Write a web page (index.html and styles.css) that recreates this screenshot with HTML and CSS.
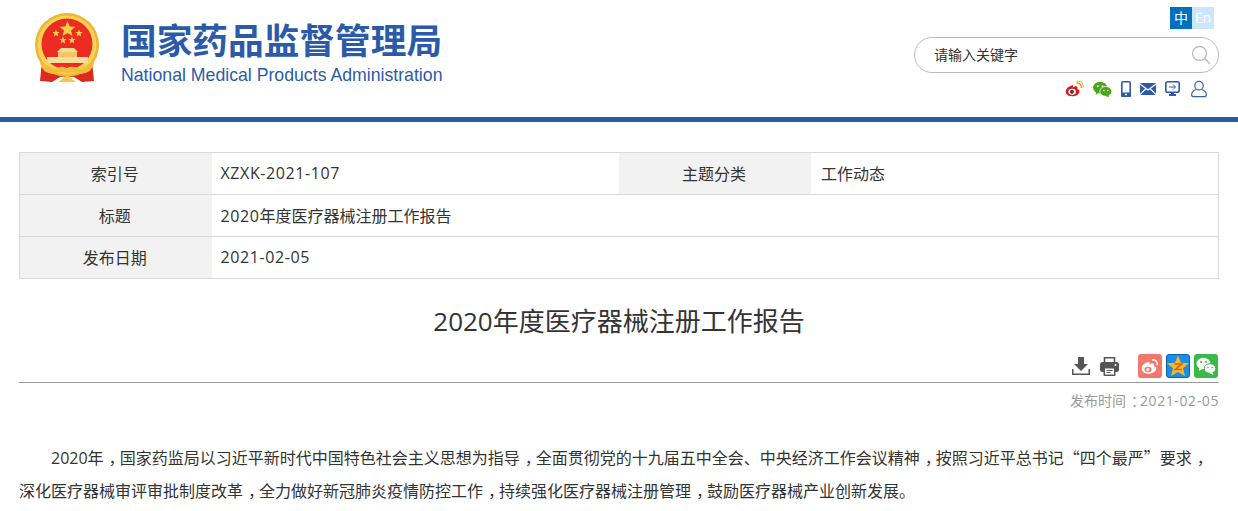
FILE: index.html
```html
<!DOCTYPE html>
<html lang="zh-CN">
<head>
<meta charset="UTF-8">
<title>2020年度医疗器械注册工作报告</title>
<link rel="stylesheet" href="styles.css">
</head>
<body>
<header class="header">
    <div class="brand">
        <svg class="emblem" width="66" height="70" viewBox="0 0 66 70">
            <!-- ribbons behind the ring -->
            <path d="M8 48 L6 68 L18 69 L26 64 L40 64 L48 69 L60 68 L58 48 Z" fill="#dc2a20"/>
            <circle cx="33" cy="32" r="32" fill="#efb631"/>
            <circle cx="33" cy="32" r="29.500" fill="#f8d257"/>
            <circle cx="33" cy="31" r="25.500" fill="#ec2c22"/>
            <polygon points="33.500,8 35.700,13.500 41.500,13.800 37,17.500 38.500,23 33.500,20 28.500,23 30,17.500 25.500,13.800 31.300,13.500" fill="#f9cf47"/>
            <polygon points="22,16.500 23,19 25.700,19 23.500,20.800 24.300,23.500 22,22 19.700,23.500 20.500,20.800 18.300,19 21,19" fill="#f9cf47"/>
            <polygon points="45,16.500 46,19 48.700,19 46.500,20.800 47.300,23.500 45,22 42.700,23.500 43.500,20.800 41.300,19 44,19" fill="#f9cf47"/>
            <polygon points="29,23.500 30,26 32.700,26 30.500,27.800 31.300,30.500 29,29 26.700,30.500 27.500,27.800 25.300,26 28,26" fill="#f9cf47"/>
            <polygon points="38,23.500 39,26 41.700,26 39.500,27.800 40.300,30.500 38,29 35.700,30.500 36.500,27.800 34.300,26 37,26" fill="#f9cf47"/>
            <!-- gate -->
            <path d="M27 35 H40 L44 39 H23 Z" fill="#f7dc92"/>
            <path d="M24 39 H43 V44 H24 Z" fill="#f3c765"/>
            <path d="M13 44 H54 V50 H13 Z" fill="#f8de97"/>
            <!-- wheat and knot -->
            <path d="M6 50 Q14 52 20 56 Q27 52 33 55 Q39 52 46 56 Q52 52 60 50 Q58 60 47 61 Q40 58 33 60 Q26 58 19 61 Q8 60 6 50 Z" fill="#f2bd3c"/>
            <path d="M24 69 L33 62 L42 69 Z" fill="#f5c94f"/>
        </svg>
        <div class="brand-text">
            <div class="brand-cn">国家药品监督管理局</div>
            <div class="brand-en">National Medical Products Administration</div>
        </div>
    </div>
    <div class="tools">
        <div class="lang"><a class="lang-cn">中</a><a class="lang-en">En</a></div>
        <div class="search">
            <span class="search-text">请输入关键字</span>
            <svg width="20" height="20" viewBox="0 0 20 20" fill="none" stroke="#bdbdbd">
                <circle cx="8.500" cy="8.500" r="7" stroke-width="1.300"/>
                <path d="M13.500 13.500 L19 19" stroke-width="1.600"/>
            </svg>
        </div>
        <div class="links">
            <svg width="19" height="18" viewBox="0 0 20 18">
                <path d="M8 5 C3 6 0 10 1 13 C2 17 9 18 13 15 C17 12 15 9 13 9.500 C14 6 11 5 8 8 C9 6 9 5 8 5 Z" fill="#e0141c"/>
                <ellipse cx="7.500" cy="12" rx="4" ry="3.200" fill="#fff"/>
                <circle cx="7.300" cy="12" r="2.200" fill="#444"/>
                <path d="M12 3 C15 2 18 5 17 8" fill="none" stroke="#f4a51c" stroke-width="1.600"/>
                <path d="M12.500 1 C17 0 20 4 19 8" fill="none" stroke="#f4a51c" stroke-width="1"/>
            </svg>
            <svg width="19" height="17" viewBox="0 0 20 17">
                <ellipse cx="7.500" cy="6.500" rx="7.500" ry="6.200" fill="#4ba51b"/>
                <path d="M3 10 L3 14 L7 11 Z" fill="#4ba51b"/>
                <ellipse cx="13.500" cy="10.500" rx="6.300" ry="5.200" fill="#4ba51b" stroke="#fff" stroke-width=".8"/>
                <path d="M16 14 L17 17 L13 15 Z" fill="#4ba51b"/>
                <circle cx="5" cy="5" r="1" fill="#fff"/><circle cx="10" cy="5" r="1" fill="#fff"/>
                <circle cx="11.500" cy="9.500" r=".8" fill="#fff"/><circle cx="15.500" cy="9.500" r=".8" fill="#fff"/>
            </svg>
            <svg width="10" height="16" viewBox="0 0 10 16">
                <rect x=".8" y=".8" width="8.400" height="14.400" rx="1.500" fill="#fff" stroke="#2b5ba8" stroke-width="1.600"/>
                <rect x="0" y="11.500" width="10" height="4.500" rx="1" fill="#2b5ba8"/>
                <circle cx="5" cy="13.500" r="1" fill="#fff"/>
            </svg>
            <svg width="16" height="12" viewBox="0 0 16 12">
                <rect width="16" height="12" rx="1" fill="#2b5ba8"/>
                <path d="M0 1 L8 7 L16 1 M0 11.500 L6 5.500 M16 11.500 L10 5.500" fill="none" stroke="#fff" stroke-width="1.200"/>
            </svg>
            <svg width="15" height="16" viewBox="0 0 15 16">
                <rect x=".8" y=".8" width="13.400" height="10.400" rx="2" fill="#fff" stroke="#2b5ba8" stroke-width="1.600"/>
                <path d="M4 6 H10 M8 3.500 L10.500 6 L8 8.500" fill="none" stroke="#2b5ba8" stroke-width="1"/>
                <path d="M6 11 H9 V13 H11 V15 H4 V13 H6 Z" fill="#2b5ba8"/>
            </svg>
            <svg class="link-user" width="16" height="18" viewBox="0 0 17 18" fill="none" stroke="#3d62ad" stroke-width="1.300">
                <circle cx="8.500" cy="5.500" r="4.500"/>
                <path d="M5 9.500 C2 11 .7 13 .7 15 C.7 16.500 1.500 17.200 3 17.200 H14 C15.500 17.200 16.300 16.500 16.300 15 C16.300 13 15 11 12 9.500"/>
            </svg>
        </div>
    </div>
</header>

<main class="content">
    <table class="meta">
        <tr>
            <th>索引号</th>
            <td class="latin">XZXK-2021-107</td>
            <th>主题分类</th>
            <td class="topic">工作动态</td>
        </tr>
        <tr>
            <th>标题</th>
            <td colspan="3"><span class="latin">2020</span>年度医疗器械注册工作报告</td>
        </tr>
        <tr>
            <th>发布日期</th>
            <td colspan="3" class="latin">2021-02-05</td>
        </tr>
    </table>

    <h1 class="title">2020年度医疗器械注册工作报告</h1>

    <div class="actions">
        <svg class="act-download" width="18" height="18" viewBox="0 0 18 18" fill="#555">
            <path d="M6 0 H12 V7 H16 L9 14 L2 7 H6 Z"/>
            <path d="M0 12 H1.500 V16.500 H16.500 V12 H18 V18 H0 Z"/>
        </svg>
        <svg class="act-print" width="19" height="19" viewBox="0 0 19 19">
            <path d="M4.500 .8 H14.500 V6 H4.500 Z" fill="none" stroke="#555" stroke-width="1.600"/>
            <rect x="0" y="5" width="19" height="10" rx="2.500" fill="#555"/>
            <rect x="3.500" y="10" width="12" height="9" rx="1" fill="#555"/>
            <rect x="5" y="11.500" width="9" height="6" fill="#fff"/>
            <path d="M6.500 13.500 H12.500 M6.500 15.500 H10.500" stroke="#555"/>
            <circle cx="15.500" cy="8" r="1" fill="#fff"/>
        </svg>
        <div class="share">
            <svg width="24" height="24" viewBox="0 0 24 24">
                <rect width="24" height="24" rx="3" fill="#f4776b"/>
                <path d="M10 8 C5 9 3 13 4 16 C5 20 12 21 16 18 C20 15 18 12 16 12.500 C17 9 14 8 11 11 C12 9 12 8 10 8 Z" fill="#fff"/>
                <ellipse cx="10" cy="15.500" rx="3.500" ry="2.800" fill="#f4776b"/>
                <circle cx="9.800" cy="15.500" r="1.500" fill="#fff"/>
                <path d="M14 6 C17 5 20 8 19 11" fill="none" stroke="#fff" stroke-width="1.500"/>
            </svg>
            <svg width="24" height="24" viewBox="0 0 24 24">
                <rect x=".5" y=".5" width="23" height="23" rx="2.500" fill="#1a8ee6" stroke="#0a62b4"/>
                <polygon points="12,1.500 15,8.800 23,9.300 17,14.300 19,22 12,18 5,22 7,14.300 1,9.300 9,8.800" fill="#f8b71f"/>
                <path d="M8.500 10 H15.500 L9.500 15.500 H16" fill="none" stroke="#d2691e" stroke-width="1.700"/>
            </svg>
            <svg width="24" height="24" viewBox="0 0 24 24">
                <rect width="24" height="24" rx="3" fill="#3cb846"/>
                <ellipse cx="9.500" cy="9.500" rx="7" ry="5.800" fill="#fff"/>
                <path d="M5 13 L5 17 L9 14.500 Z" fill="#fff"/>
                <ellipse cx="16" cy="14.500" rx="5.800" ry="4.800" fill="#fff" stroke="#3cb846"/>
                <path d="M18.500 18 L19.500 21 L15.500 19 Z" fill="#fff"/>
                <circle cx="7" cy="8" r="1" fill="#3cb846"/><circle cx="12" cy="8" r="1" fill="#3cb846"/>
                <circle cx="14" cy="13.500" r=".8" fill="#3cb846"/><circle cx="18" cy="13.500" r=".8" fill="#3cb846"/>
            </svg>
        </div>
    </div>

    <div class="date">发布时间<span class="comma">：</span><span class="latin">2021-02-05</span></div>

    <div class="article">
        <p>2020年<span class="comma">，</span>国家药监局以习近平新时代中国特色社会主义思想为指导<span class="comma">，</span>全面贯彻党的十九届五中全会、中央经济工作会议精神<span class="comma">，</span>按照习近平总书记<span class="cjk">“四个最严”</span>要求<span class="comma">，</span>深化医疗器械审评审批制度改革<span class="comma">，</span>全力做好新冠肺炎疫情防控工作<span class="comma">，</span>持续强化医疗器械注册管理<span class="comma">，</span>鼓励医疗器械产业创新发展。</p>
    </div>
</main>
</body>
</html>
```

FILE: styles.css
```css
html, body {
    margin: 0;
    padding: 0;
}
body {
    font-family: "Open Sans", "Noto Sans CJK SC", sans-serif;
    color: #333;
    background: #fff;
    overflow: hidden;
}
.latin {
    letter-spacing: .6px;
}
.cjk {
    font-family: "Noto Sans CJK SC", sans-serif;
}
/* full-width punctuation sits in the middle of its box */
.comma {
    padding-left: 5px;
    letter-spacing: -5px;
}
.header {
    display: flex;
    justify-content: space-between;
    height: 117px;
    border-bottom: 5px solid #2b5ba8;
    padding: 0 19px 0 34px;
}
.brand {
    display: flex;
    align-items: flex-start;
    padding-top: 13px;
}
.emblem {
    margin-right: 21px;
}
.brand-cn {
    font: bold 35.700px/40px "Noto Sans CJK SC", sans-serif;
    color: #2b5ba8;
    white-space: nowrap;
    margin-top: 6px;
}
.brand-en {
    font: 17.700px/22px "Liberation Sans", sans-serif;
    color: #2b5ba8;
    margin-top: 5px;
    white-space: nowrap;
}
.tools {
    display: flex;
    flex-direction: column;
    align-items: flex-end;
    width: 305px;
    padding-top: 7px;
}
.lang {
    display: flex;
    margin-right: 5px;
}
.lang a {
    width: 22px;
    height: 22px;
    font-size: 14px;
    line-height: 21px;
    text-align: center;
    color: #fff;
}
.lang-cn {
    background: #0070c0;
}
.lang-en {
    background: #cce6ff;
}
.search {
    box-sizing: border-box;
    display: flex;
    align-items: center;
    justify-content: space-between;
    width: 305px;
    height: 36px;
    margin-top: 8px;
    padding: 0 7px 1px 19px;
    border: 1px solid #bbb;
    border-radius: 18px;
}
.search-text {
    font-size: 14px;
    color: #333;
    margin-bottom: 2px;
}
.links {
    display: flex;
    align-items: center;
    gap: 9px;
    margin-top: 7px;
    margin-right: 12px;
}
.link-user {
    margin-left: 2px;
}
.content {
    padding: 30px 19px 0;
}
.meta {
    width: 1200px;
    table-layout: fixed;
    border-collapse: collapse;
    border: 1px solid #d9d9d9;
    font-size: 16px;
}
.meta th, .meta td {
    box-sizing: border-box;
    height: 42px;
    padding: 0 0 2px;
    border-top: 1px solid #d9d9d9;
    border-bottom: 1px solid #d9d9d9;
    font-weight: normal;
}
.meta th {
    width: 192px;
    padding-right: 2px;
    background: #f2f2f2;
    text-align: center;
}
.meta td {
    padding-left: 9px;
}
.meta .topic {
    padding-left: 10px;
}
.title {
    margin: 22px 0 0;
    font-size: 26px;
    line-height: 40px;
    font-weight: normal;
    text-align: center;
    color: #333;
}
.actions {
    display: flex;
    align-items: flex-start;
    justify-content: flex-end;
    height: 28px;
    margin-top: 13px;
    padding-right: 1px;
    border-bottom: 1px solid #999;
}
.act-download {
    margin-top: 3px;
}
.act-print {
    margin-top: 3px;
    margin-left: 10px;
}
.share {
    display: flex;
    gap: 4px;
    margin-left: 19px;
}
.date {
    margin-top: 8px;
    font-size: 14px;
    line-height: 20px;
    text-align: right;
    color: #999;
}
.article {
    margin-top: 30px;
    font-size: 16px;
    line-height: 33px;
    color: #333;
}
.article p {
    margin: 0;
    text-indent: 32px;
}
```
